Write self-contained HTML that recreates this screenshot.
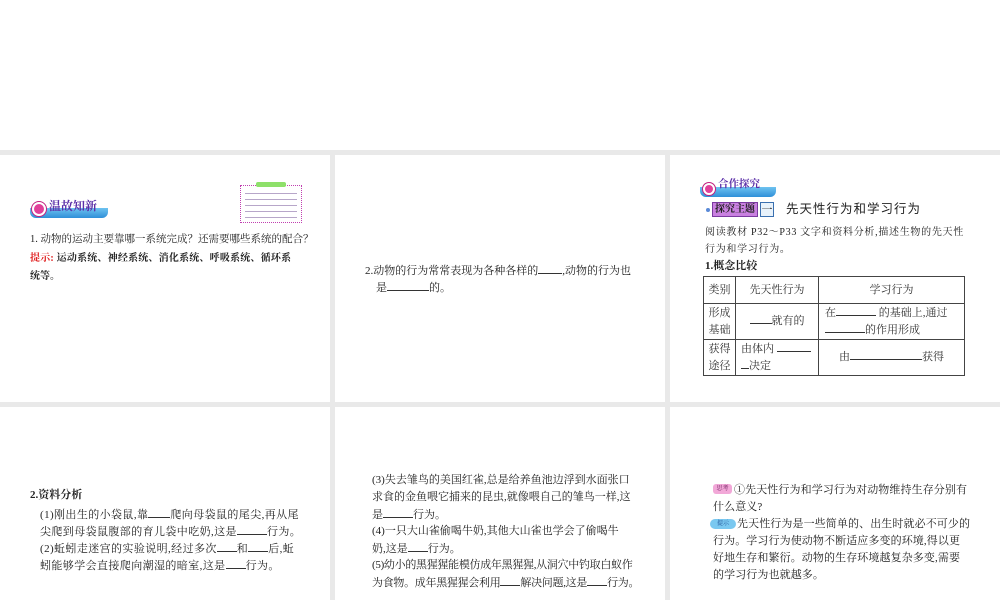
<!DOCTYPE html>
<html><head><meta charset="utf-8"><style>
*{margin:0;padding:0;box-sizing:border-box}
body{width:1000px;height:600px;background:#fff;position:relative;overflow:hidden;font-family:"Liberation Serif","Noto Serif CJK SC","Noto Sans CJK SC",serif;color:#222}
.g{position:absolute;background:#e9e9e9}
.t{position:absolute;font-size:11px;white-space:nowrap;line-height:14px}
u{text-decoration:none;border-bottom:1px solid #333;display:inline-block;height:11px}
.badge{position:absolute;height:10px;border-radius:0 0 6px 6px;background:linear-gradient(#6ec3f0,#2f8fd8)}
.circ{position:absolute;width:14px;height:14px;border-radius:50%;background:#e0409a;border:2px solid #fff;box-shadow:0 0 0 1px #c02080}
table{border-collapse:collapse;position:absolute;left:703px;top:276px;width:262px;font-size:11px}
td{border:1px solid #444;text-align:center;line-height:17px;color:#333}
</style></head><body>
<div class="g" style="left:0;top:150px;width:1000px;height:5px"></div>
<div class="g" style="left:0;top:402px;width:1000px;height:5px"></div>
<div class="g" style="left:330px;top:150px;width:5px;height:450px"></div>
<div class="g" style="left:665px;top:150px;width:5px;height:450px"></div>

<!-- panel 1 -->
<div class="badge" style="left:30px;top:208px;width:78px"></div>
<div class="circ" style="left:32px;top:202px"></div>
<div class="t" style="left:49px;top:199px;color:#5b2fa8;font-weight:bold;font-size:12px">温故知新</div>
<div style="position:absolute;left:240px;top:185px;width:62px;height:38px;border:1px dotted #c040b0"></div>
<div style="position:absolute;left:256px;top:182px;width:30px;height:5px;background:#8ee06a;border-radius:2px"></div>
<div style="position:absolute;left:245px;top:191px;width:52px;height:28px;background:repeating-linear-gradient(#fff 0 2px,#b7a6c9 2px 3px,#fff 3px 6px)"></div>
<div class="t" style="left:30px;top:233px;font-size:10.5px">1. 动物的运动主要靠哪一系统完成？还需要哪些系统的配合？</div>
<div class="t" style="left:30px;top:252px;font-weight:bold;font-size:10px;letter-spacing:0.2px"><span style="color:#e02020">提示:</span> 运动系统、神经系统、消化系统、呼吸系统、循环系</div>
<div class="t" style="left:30px;top:270px;font-weight:bold;font-size:10px">统等。</div>

<!-- panel 2 -->
<div class="t" style="left:365px;top:263px">2.动物的行为常常表现为各种各样的<u style="width:24px"></u>,动物的行为也</div>
<div class="t" style="left:376px;top:280px">是<u style="width:42px"></u>的。</div>

<!-- panel 3 -->
<div class="badge" style="left:700px;top:187px;width:76px"></div>
<div class="circ" style="left:703px;top:183px;width:12px;height:12px"></div>
<div class="t" style="left:718px;top:178px;color:#5b2fa8;font-weight:bold;font-size:10.5px">合作探究</div>
<div style="position:absolute;left:706px;top:208px;width:4px;height:4px;border-radius:50%;background:#5a8ad8"></div>
<div class="t" style="left:712px;top:202px;width:46px;height:15px;background:#c980e0;border:1px solid #7a3aa0;font-size:10px;font-weight:bold;padding-left:2px">探究主题</div>
<div class="t" style="left:760px;top:202px;width:14px;height:15px;border:1px solid #3a70b0;background:#e8f2fb;text-align:center">一</div>
<div class="t" style="left:786px;top:202px;font-size:12.5px;font-family:'Liberation Sans','Noto Sans CJK SC',sans-serif;letter-spacing:1px">先天性行为和学习行为</div>
<div class="t" style="left:705px;top:226px;font-size:10px;letter-spacing:0.7px">阅读教材 P32～P33 文字和资料分析,描述生物的先天性</div>
<div class="t" style="left:705px;top:243px;font-size:10px;letter-spacing:0.7px">行为和学习行为。</div>
<div class="t" style="left:705px;top:259px;font-weight:bold">1.概念比较</div>
<table>
<tr style="height:27px"><td style="width:32px">类别</td><td style="width:83px">先天性行为</td><td>学习行为</td></tr>
<tr style="height:36px"><td>形成<br>基础</td><td><u style="width:22px"></u>就有的</td><td style="text-align:left;padding-left:6px">在<u style="width:40px"></u> 的基础上,通过<br><u style="width:40px"></u>的作用形成</td></tr>
<tr style="height:36px"><td>获得<br>途径</td><td style="text-align:left;padding-left:5px">由体内 <u style="width:34px"></u><br><u style="width:8px"></u>决定</td><td>由<u style="width:72px"></u>获得</td></tr>
</table>

<!-- panel 4 -->
<div class="t" style="left:30px;top:488px;font-weight:bold">2.资料分析</div>
<div class="t" style="left:40px;top:507px;letter-spacing:0.4px">(1)刚出生的小袋鼠,靠<u style="width:22px"></u>爬向母袋鼠的尾尖,再从尾</div>
<div class="t" style="left:40px;top:524px;letter-spacing:0.4px">尖爬到母袋鼠腹部的育儿袋中吃奶,这是<u style="width:30px"></u>行为。</div>
<div class="t" style="left:40px;top:541px;letter-spacing:0.4px">(2)蚯蚓走迷宫的实验说明,经过多次<u style="width:20px"></u>和<u style="width:20px"></u>后,蚯</div>
<div class="t" style="left:40px;top:558px;letter-spacing:0.4px">蚓能够学会直接爬向潮湿的暗室,这是<u style="width:20px"></u>行为。</div>

<!-- panel 5 -->
<div class="t" style="left:372px;top:473px">(3)失去雏鸟的美国红雀,总是给养鱼池边浮到水面张口</div>
<div class="t" style="left:372px;top:490px">求食的金鱼喂它捕来的昆虫,就像喂自己的雏鸟一样,这</div>
<div class="t" style="left:372px;top:507px">是<u style="width:30px"></u>行为。</div>
<div class="t" style="left:372px;top:524px">(4)一只大山雀偷喝牛奶,其他大山雀也学会了偷喝牛</div>
<div class="t" style="left:372px;top:541px">奶,这是<u style="width:20px"></u>行为。</div>
<div class="t" style="left:372px;top:558px;letter-spacing:-0.3px">(5)幼小的黑猩猩能模仿成年黑猩猩,从洞穴中钓取白蚁作</div>
<div class="t" style="left:372px;top:575px;letter-spacing:-0.3px">为食物。成年黑猩猩会利用<u style="width:20px"></u>解决问题,这是<u style="width:20px"></u>行为。</div>

<!-- panel 6 -->
<div style="position:absolute;left:713px;top:484px;width:19px;height:10px;background:#f2a8d8;border-radius:3px;font-size:6px;color:#702060;text-align:center;line-height:10px">思考</div>
<div class="t" style="left:734px;top:483px;letter-spacing:0.1px">①先天性行为和学习行为对动物维持生存分别有</div>
<div class="t" style="left:713px;top:500px;letter-spacing:0.1px">什么意义?</div>
<div style="position:absolute;left:710px;top:519px;width:26px;height:10px;background:#7ac8f0;border-radius:5px;font-size:6px;color:#1a4a90;text-align:center;line-height:10px">提示</div>
<div class="t" style="left:737px;top:517px;letter-spacing:0.1px">先天性行为是一些简单的、出生时就必不可少的</div>
<div class="t" style="left:713px;top:534px;letter-spacing:0.1px">行为。学习行为使动物不断适应多变的环境,得以更</div>
<div class="t" style="left:713px;top:551px;letter-spacing:0.1px">好地生存和繁衍。动物的生存环境越复杂多变,需要</div>
<div class="t" style="left:713px;top:568px;letter-spacing:0.1px">的学习行为也就越多。</div>
</body></html>
